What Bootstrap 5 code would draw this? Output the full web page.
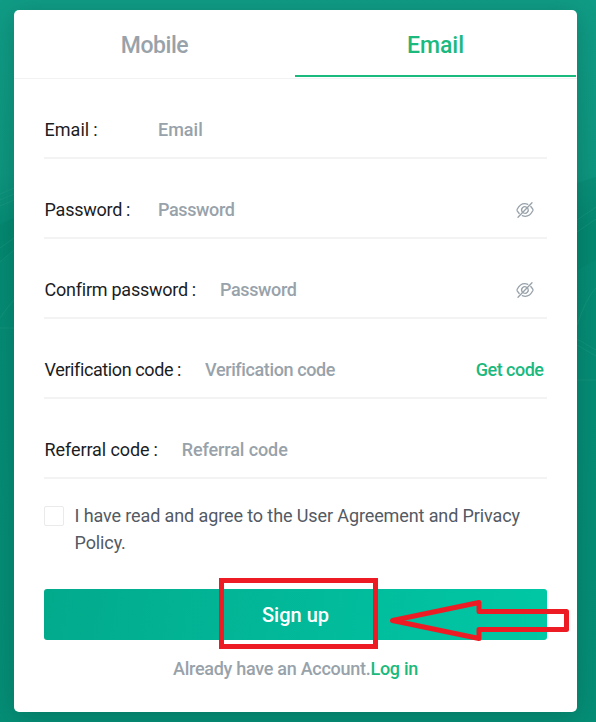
<!DOCTYPE html>
<html lang="en">
<head>
<meta charset="utf-8">
<meta name="viewport" content="width=device-width, initial-scale=1">
<title>Sign up</title>
<link href="https://cdn.jsdelivr.net/npm/bootstrap@5.3.0/dist/css/bootstrap.min.css" rel="stylesheet">
<style>
  body { font-family: Roboto, "Liberation Sans", sans-serif; font-size: 18px; line-height: 27px; height: 722px; overflow: hidden; background: #058b74; color: #1b1d1f; }
  .backdrop { width: 596px; height: 722px; }
  .page { padding: 10px 19px 10px 14px; height: 722px; }
  .signup { height: 702px; border-radius: 5px; box-shadow: 0 4px 26px rgba(0, 60, 48, .28); }
  .tabs { height: 69px; border-bottom: 1px solid #f1f2f3; padding-right: 1px; }
  .tabs a { font-size: 23px; font-weight: 500; color: #98a2aa; height: 67px; padding-top: 5px; border-bottom: 2px solid transparent; letter-spacing: -.45px; }
  .tabs a.on { color: #1bb97d; border-color: #1bb97d; letter-spacing: 0; }
  .body-pad { padding: 0 30px; }
  .field { height: 80px; padding-top: 37px; border-bottom: 2px solid #f3f3f3; }
  .field label { min-width: 114px; padding: 0 24px 0 .6px; white-space: nowrap; letter-spacing: -.25px; }
  .field label i { font-style: normal; padding-left: 4px; }
  .field input { min-width: 0; border: 0; padding: 0; height: 27px; background: none; font-weight: 500; outline: 0; letter-spacing: -.38px; }
  .field input::placeholder { color: #98a2aa; opacity: 1; }
  .field.f-email label, .field.f-email input { letter-spacing: 0; }
  .field.f-verify label { letter-spacing: -.4px; }
  .field.f-referral label, .field.f-referral input { letter-spacing: -.1px; }
  .green { color: #1bb97d; font-weight: 500; text-decoration: none; }
  .get-code { padding-right: 3.500px; letter-spacing: -.5px; }
  .eye { width: 18px; height: 18px; margin: 5px 13px 0 0; }
  .agree { margin-top: 23px; color: #535a64; letter-spacing: -.11px; }
  .tick { width: 20px; height: 20px; margin: 4px 10.500px 0 0; border: 1px solid #e9eaeb; border-radius: 2px; background: #fff; }
  .go { margin-top: 33px; height: 51px; padding: 2px 0 0; border: 0; border-radius: 3px; color: #fff; font-size: 20px; font-weight: 500; background: linear-gradient(100deg, #02aa8c, #01c8a6); }
  .already { margin-top: 15px; color: #98a2aa; font-weight: 500; letter-spacing: -.28px; }
  .frame { left: 219px; top: 578px; width: 159px; height: 71px; border: 5px solid #ed1c24; }
  .arrow { left: 388px; top: 598px; }
</style>
</head>
<body>
<svg class="backdrop position-absolute top-0 start-0" viewBox="0 0 596 722" aria-hidden="true">
  <defs><linearGradient id="bg" x2="0" y2="1"><stop offset="0" stop-color="#109c86"/><stop offset=".24" stop-color="#0e9680"/><stop offset=".32" stop-color="#058b74"/><stop offset="1" stop-color="#058e77"/></linearGradient></defs>
  <path fill="url(#bg)" d="M0 0H596V722H0z"/>
  <path fill="#028069" opacity=".3" d="M577 183L596 177V260L577 270zM0 224L14 218V250L0 262z"/>
  <g fill="none" stroke="#39ab94" stroke-width="1" opacity=".25"><path d="M0 194L14 188M0 200L14 194M0 206L14 200M0 248L14 238M0 262L14 250M0 318Q8 306 14 300M0 328H14M577 220L596 207M577 232L596 219M577 325Q586 298 596 288M577 339L596 350M577 345L596 356M577 380H596"/></g>
</svg>
<main class="page position-relative">
  <section class="signup bg-white">
    <nav class="tabs d-flex">
      <a href="#" class="w-50 d-flex align-items-center justify-content-center text-decoration-none">Mobile</a>
      <a href="#" class="on w-50 d-flex align-items-center justify-content-center text-decoration-none">Email</a>
    </nav>
    <form class="body-pad">
      <div class="field f-email d-flex"><label for="email">Email<i>:</i></label><input id="email" class="flex-grow-1" placeholder="Email"></div>
      <div class="field d-flex"><label for="pw">Password<i>:</i></label><input id="pw" type="password" class="flex-grow-1" placeholder="Password">
        <svg class="eye" viewBox="0 0 18 18" fill="none" stroke="#98a2aa" stroke-width="1.3" stroke-linecap="round"><path d="M11.8 3.3C7.500 1.700 3.500 4 1.200 8.200Q.8 9 1.200 9.800L3.200 12.500M6.300 14.700C10.500 16.300 14.500 14 16.800 9.800Q17.200 9 16.800 8.200L14.800 5.500M10.700 6.200A3.300 3.300 0 0 0 6.300 11M7.600 12A3.300 3.300 0 0 0 11.900 7.500M2 16.300L16 1.700"/></svg></div>
      <div class="field d-flex"><label for="pw2">Confirm password<i>:</i></label><input id="pw2" type="password" class="flex-grow-1" placeholder="Password">
        <svg class="eye" viewBox="0 0 18 18" fill="none" stroke="#98a2aa" stroke-width="1.3" stroke-linecap="round"><path d="M11.8 3.3C7.500 1.700 3.500 4 1.200 8.200Q.8 9 1.200 9.800L3.200 12.500M6.300 14.700C10.500 16.300 14.500 14 16.800 9.800Q17.200 9 16.800 8.200L14.800 5.500M10.700 6.200A3.300 3.300 0 0 0 6.300 11M7.600 12A3.300 3.300 0 0 0 11.900 7.500M2 16.300L16 1.700"/></svg></div>
      <div class="field f-verify d-flex"><label for="vc">Verification code<i>:</i></label><input id="vc" class="flex-grow-1" placeholder="Verification code"><a href="#" class="green get-code text-nowrap">Get code</a></div>
      <div class="field f-referral d-flex"><label for="rc">Referral code<i>:</i></label><input id="rc" class="flex-grow-1" placeholder="Referral code"></div>
      <div class="agree d-flex"><span class="tick flex-shrink-0"></span><span class="terms">I have read and agree to the User Agreement and Privacy<br>Policy.</span></div>
      <button type="button" class="go d-block w-100">Sign up</button>
      <p class="already text-center mb-0">Already have an Account.<a href="#" class="green">Log in</a></p>
    </form>
  </section>
</main>
<div class="frame position-absolute"></div>
<svg class="arrow position-absolute" width="186" height="46" viewBox="388 598 186 46" fill="none" stroke="#ed1c24" stroke-width="5" aria-hidden="true"><path stroke-linejoin="round" d="M392.500 620.500L479 602.500V611.500H566.500V629.500H479V638.500Z"/></svg>
<script src="https://cdn.jsdelivr.net/npm/bootstrap@5.3.0/dist/js/bootstrap.bundle.min.js"></script>
</body>
</html>
